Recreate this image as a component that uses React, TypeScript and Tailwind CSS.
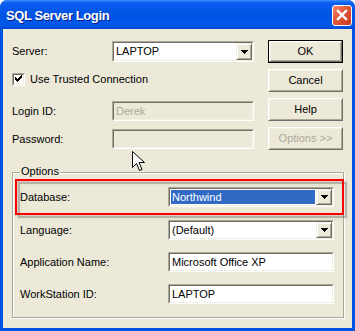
import React from "react";

function Sunken({ className, inner, children }: { className: string; inner: string; children?: React.ReactNode }) {
  return (
    <div className={`border border-t-[#ACA899] border-l-[#ACA899] border-b-white border-r-white ${className}`}>
      <div className={`h-full w-full border border-t-[#716F64] border-l-[#716F64] border-b-[#F1EFE2] border-r-[#F1EFE2] flex items-stretch ${inner}`}>
        {children}
      </div>
    </div>
  );
}

function DropBtn() {
  return (
    <div className="w-[16px] h-full bg-[#ECE9D8] border border-t-[#F1EFE2] border-l-[#F1EFE2] border-b-[#716F64] border-r-[#716F64] shadow-[inset_1px_1px_0_#FFFFFF,inset_-1px_-1px_0_#ACA899] flex items-center justify-center">
      <svg width="7" height="4" viewBox="0 0 7 4" shapeRendering="crispEdges">
        <path d="M0 0h7v1h-1v1h-1v1h-1v1h-1v-1h-1v-1h-1v-1h-1z" fill="#000" />
      </svg>
    </div>
  );
}

function Btn({ label, def, disabled }: { label: string; def?: boolean; disabled?: boolean }) {
  return (
    <div className={`w-[75px] h-[23px] ${def ? "border border-black" : ""}`}>
      <div className="h-full w-full border border-t-white border-l-white border-b-[#716F64] border-r-[#716F64] bg-[#ECE9D8] shadow-[inset_1px_1px_0_#F1EFE2,inset_-1px_-1px_0_#ACA899] flex items-center justify-center">
        <span className={`text-[11px] leading-none ${disabled ? "text-[#ACA899]" : "text-black"}`}>{label}</span>
      </div>
    </div>
  );
}

export default function App() {
  return (
    <div className="w-[355px] h-[331px] bg-[#0054E3] rounded-t-[7px] flex flex-col font-['Liberation_Sans',Arial,sans-serif] overflow-hidden">
      {/* Title bar */}
      <div className="h-[29px] shrink-0 rounded-t-[7px] bg-[linear-gradient(to_bottom,#3D8FFF_0%,#0A5DF0_10%,#0054E3_55%,#0058EA_85%,#0048D8_100%)] flex items-center justify-between pl-[6px] pr-[3px]">
        <span className="text-white font-bold text-[13px] tracking-[-0.4px] [text-shadow:1px_1px_0_#0A1E8A] leading-none mt-[1px]">SQL Server Login</span>
        <div className="w-[20px] h-[21px] mt-[1px] rounded-[3px] border border-white bg-[linear-gradient(135deg,#F08A6C_0%,#E2563A_45%,#C93A1E_100%)] flex items-center justify-center">
          <svg width="12" height="12" viewBox="0 0 12 12">
            <path d="M2 2L10 10M10 2L2 10" stroke="#fff" strokeWidth="2.4" strokeLinecap="square" />
          </svg>
        </div>
      </div>

      {/* Body */}
      <div className="relative flex-1 mx-[3px] mb-[3px] bg-[#ECE9D8] text-[11px] text-black flex flex-col">
        <div className="flex items-start pl-[9px] pt-[11px]">
          <div className="flex flex-col w-[242px] mt-[1px]">
            <div className="flex items-center h-[21px]">
              <span className="w-[100px]">Server:</span>
              <Sunken className="w-[142px] h-[21px]" inner="bg-white">
                <div className="flex-1 flex items-center pl-[2px]">LAPTOP</div>
                <DropBtn />
              </Sunken>
            </div>
            <div className="flex items-center h-[13px] mt-[11px]">
              <Sunken className="w-[13px] h-[13px]" inner="bg-white items-center justify-center">
                <svg width="7" height="7" viewBox="0 0 7 7" shapeRendering="crispEdges">
                  <path d="M0 2h1v1h1v1h1v-1h1v-1h1v-1h1v-1h1v3h-1v1h-1v1h-1v1h-1v1h-1v-1h-1v-1h-1z" fill="#000" />
                </svg>
              </Sunken>
              <span className="ml-[5px]">Use Trusted Connection</span>
            </div>
            <div className="flex items-center h-[20px] mt-[15px]">
              <span className="w-[100px]">Login ID:</span>
              <Sunken className="w-[142px] h-[20px]" inner="bg-[#ECE9D8]">
                <div className="flex-1 flex items-center pl-[2px] text-[#ACA899]">Derek</div>
              </Sunken>
            </div>
            <div className="flex items-center h-[20px] mt-[8px]">
              <span className="w-[100px]">Password:</span>
              <Sunken className="w-[142px] h-[20px]" inner="bg-[#ECE9D8]" />
            </div>
          </div>
          <div className="flex flex-col gap-[6px] ml-[14px]">
            <Btn label="OK" def />
            <Btn label="Cancel" />
            <Btn label="Help" />
            <Btn label="Options >>" disabled />
          </div>
        </div>

        {/* Options group */}
        <div className="relative ml-[9px] mt-[22px] w-[332px] h-[146px] border border-[#ACA899] shadow-[1px_1px_0_#FFFFFF,inset_1px_1px_0_#FFFFFF] flex flex-col pl-[7px] pt-[14px]">
          <span className="absolute left-[7px] top-[-8px] px-[1px] bg-[#ECE9D8] leading-[13px]">Options</span>
          <div className="flex items-center h-[20px]">
            <span className="w-[148px]">Database:</span>
            <Sunken className="w-[166px] h-[20px]" inner="bg-white">
              <div className="flex-1 flex items-stretch p-[1px]">
                <div className="flex-1 bg-[#316AC5] text-white flex items-center pl-[1px]">Northwind</div>
              </div>
              <DropBtn />
            </Sunken>
          </div>
          <div className="flex items-center h-[20px] mt-[13px]">
            <span className="w-[148px]">Language:</span>
            <Sunken className="w-[166px] h-[20px]" inner="bg-white">
              <div className="flex-1 flex items-center pl-[2px]">(Default)</div>
              <DropBtn />
            </Sunken>
          </div>
          <div className="flex items-center h-[20px] mt-[12px]">
            <span className="w-[148px]">Application Name:</span>
            <Sunken className="w-[166px] h-[20px]" inner="bg-white">
              <div className="flex-1 flex items-center pl-[2px]">Microsoft Office XP</div>
            </Sunken>
          </div>
          <div className="flex items-center h-[20px] mt-[12px]">
            <span className="w-[148px]">WorkStation ID:</span>
            <Sunken className="w-[166px] h-[20px]" inner="bg-white">
              <div className="flex-1 flex items-center pl-[2px]">LAPTOP</div>
            </Sunken>
          </div>
        </div>

        {/* Red highlight annotation */}
        <div className="absolute left-[12px] top-[150px] w-[329px] h-[36px] border-2 border-[#FF0000] [filter:drop-shadow(3px_3px_0px_rgba(0,0,0,0.18))_drop-shadow(2px_2px_1px_rgba(0,0,0,0.15))] pointer-events-none" />

        {/* Mouse cursor */}
        <svg className="absolute left-[129px] top-[122px]" width="14" height="22" viewBox="0 0 14 22">
          <path d="M0.5 0.5 L0.5 16.5 L4.5 12.5 L7.5 19.5 L10 18.5 L7 11.5 L12.5 11.5 Z" fill="#fff" stroke="#000" strokeWidth="1" strokeLinejoin="miter" />
        </svg>
      </div>
    </div>
  );
}
